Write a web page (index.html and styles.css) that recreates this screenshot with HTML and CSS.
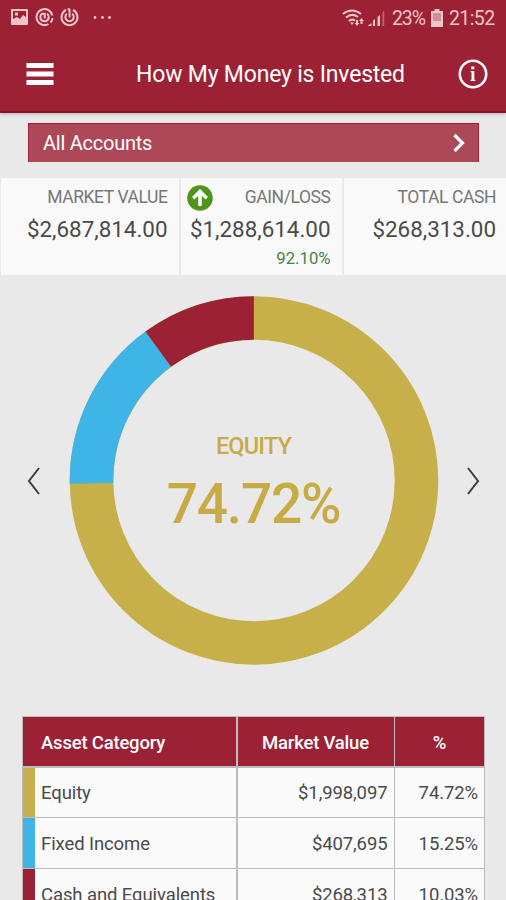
FILE: index.html
```html
<!DOCTYPE html>
<html lang="en">
<head>
<meta charset="utf-8">
<title>How My Money is Invested</title>
<link rel="stylesheet" href="styles.css">
</head>
<body>
<div class="app">
  <header class="top">
    <div class="status">
      <svg class="status-left" width="110" height="24" viewBox="0 0 110 24" fill="none">
        <path fill="#f0c4cb" fill-rule="evenodd" d="M2 4h15a1 1 0 0 1 1 1v14a1 1 0 0 1-1 1H2a1 1 0 0 1-1-1V5a1 1 0 0 1 1-1zM3 6v8l4-2 3 2 3-4 3 2V6zM5 7.500h3v3H5z"/>
        <g stroke="#f0c4cb" stroke-width="2">
          <path d="M38.500 19A8 8 0 1 1 42.300 10.500M42.500 13A8 8 0 0 1 40.500 17.600"/>
          <path d="M32 8.800A4.200 4.200 0 1 0 37 8.800M31.500 8.800H34.700V13.500"/>
          <path d="M63 5A8 8 0 1 1 56 5M57.500 4.200H60"/>
          <path d="M56.800 8.800A4.200 4.200 0 1 0 62.300 8.800M59.600 4V12.500"/>
        </g>
        <g fill="#f0c4cb"><circle cx="85" cy="12.500" r="1.400"/><circle cx="92.500" cy="12.500" r="1.400"/><circle cx="99.500" cy="12.500" r="1.400"/></g>
      </svg>
      <div class="status-right">
        <svg width="46" height="22" viewBox="0 0 46 22" fill="none">
          <g stroke="#f0c4cb" stroke-width="2"><path d="M.8 7Q10 0 19 7M4 10.500Q10 5.500 16 10M6.800 14Q10 11.500 13 13.500"/></g>
          <path fill="#f0c4cb" d="M8 15.500h4L10 18zM14 13h2v3h1.500L15 19l-2.500-3H14zM18.500 17v-3H17l2.500-3 2.500 3h-1.500v3z"/>
          <path fill="#f0c4cb" d="M25.500 19l4-3v3zM31 13.500l2-1.500v7h-2zM35.500 10l2.500-2v11h-2.500z"/><path fill="#bd6573" d="M40.500 5l1.700-1.500V19h-1.700z"/>
        </svg>
        <span class="status-pct">23%</span>
        <svg width="12" height="18" viewBox="0 0 12 18"><path fill="#f0c4cb" d="M3.500 0h5v2H12v16H0V2h3.500z"/><path fill="#d58e99" d="M2 4h8v8H2z"/></svg>
        <span class="status-time">21:52</span>
      </div>
    </div>
    <div class="bar">
      <svg class="menu" width="28" height="24" viewBox="0 0 28 24"><path fill="#fff" d="M.5 1H27.500v5H.5zM.5 9.500H27.500v5H.5zM.5 18H27.500v5H.5z"/></svg>
      <h1 class="title">How My Money is Invested</h1>
      <svg class="info" width="30" height="30" viewBox="0 0 30 30"><circle cx="15" cy="15" r="13.200" fill="none" stroke="#fff" stroke-width="2.600"/><path fill="#fff" d="M13.300 7.500h3v2.800h-3zM12.600 12h3.700v8.800h1v1.200h-4.700v-1.200h.9v-7.600h-.9z"/></svg>
    </div>
  </header>
  <button class="accounts"><span>All Accounts</span>
    <svg width="12" height="20" viewBox="0 0 12 20"><path d="M1.500 2L9.500 10 1.500 18" fill="none" stroke="#fff" stroke-width="3.200"/></svg>
  </button>
  <section class="summary">
    <div class="stat"><div class="label">MARKET VALUE</div><div class="value">$2,687,814.00</div></div>
    <div class="stat">
      <div class="gain"><svg width="26" height="26" viewBox="0 0 26 26"><circle cx="13" cy="13" r="12.800" fill="#4f951b"/><path fill="#fff" d="M13 4L21 12l-2.400 2.500-3.800-3.700V21h-3.600V10.800l-3.800 3.700L5 12z"/></svg><div class="label">GAIN/LOSS</div></div>
      <div class="value">$1,288,614.00</div><div class="change">92.10%</div>
    </div>
    <div class="stat"><div class="label">TOTAL CASH</div><div class="value">$268,313.00</div></div>
  </section>
  <section class="chart">
    <svg class="arrow" width="14" height="28" viewBox="0 0 14 28"><path d="M12 1L2 14 12 27" fill="none" stroke="#3c3c3c" stroke-width="2"/></svg>
    <div class="donut">
      <svg width="370" height="370" viewBox="0 0 370 370">
        <g fill="none" stroke-width="43.600" transform="rotate(-90 184.500 184.500)">
          <circle cx="184.500" cy="185" r="162.500" stroke="#c7b049"/>
          <circle cx="184.500" cy="185" r="162.500" pathLength="100" stroke="#3fb4e6" stroke-dasharray="15.250 84.750" stroke-dashoffset="-74.720"/>
          <circle cx="184.500" cy="185" r="162.500" pathLength="100" stroke="#9c2135" stroke-dasharray="0 89.970 10.020 20"/>
        </g>
      </svg>
      <div class="center"><span class="name">EQUITY</span><span class="percent">74.72%</span></div>
    </div>
    <svg class="arrow" width="14" height="28" viewBox="0 0 14 28"><path d="M2 1L12 14 2 27" fill="none" stroke="#3c3c3c" stroke-width="2"/></svg>
  </section>
  <section class="table">
    <div class="row head"><div class="cell cat">Asset Category</div><div class="cell">Market Value</div><div class="cell">%</div></div>
    <div class="row"><div class="cell cat gold">Equity</div><div class="cell num">$1,998,097</div><div class="cell num">74.72%</div></div>
    <div class="row"><div class="cell cat blue">Fixed Income</div><div class="cell num">$407,695</div><div class="cell num">15.25%</div></div>
    <div class="row"><div class="cell cat red">Cash and Equivalents</div><div class="cell num">$268,313</div><div class="cell num">10.03%</div></div>
  </section>
</div>
</body>
</html>
```
FILE: styles.css
```css
* { box-sizing: border-box; }
body { margin: 0; font-family: Roboto, "Liberation Sans", sans-serif; background: #e9e9e9; color: #4a4a4a; }
.app { width: 506px; height: 900px; overflow: hidden; }
.top { height: 113px; background: #9c2135; border-bottom: 2px solid #920d1c; box-shadow: 0 1px 4px #aab5b5; }
.status { height: 36px; padding: 0 11px 0 10px; display: flex; justify-content: space-between; align-items: center; color: #f0c4cb; font-size: 19.500px; }
.status-left { margin-top: -2px; }
.status-right { display: flex; align-items: center; }
.status-right svg { flex: none; }
.status-pct { margin: 0 6px 0 4px; width: 33px; letter-spacing: -1.100px; white-space: nowrap; }
.status-time { margin-left: 6px; width: 46px; letter-spacing: -.6px; }
.bar { height: 76px; padding: 0 18px 0 26px; display: flex; align-items: center; justify-content: space-between; }
.title { margin: 0 0 0 29px; color: #fff; font-size: 23px; font-weight: 400; letter-spacing: -.2px; white-space: nowrap; }
.accounts { display: flex; align-items: center; justify-content: space-between; width: 451px; height: 39px; margin: 10px 0 0 28px; padding: 0 13px 0 14px; border: solid #a3203f; border-width: 1px 1px 0; background: #ac4858; color: #fff; font: 20px Roboto, sans-serif; letter-spacing: -.25px; }
.summary { display: grid; grid-template-columns: 178px 161px 162px; gap: 2px; height: 97px; margin-top: 16px; padding-left: 1px; }
.stat { background: #f9f9f9; padding: 9px 11.500px 0 0; text-align: right; }
.stat:nth-child(3) { padding-right: 10px; }
.label { font-size: 17.500px; line-height: 20px; letter-spacing: -.42px; color: #777; }
.value { font-size: 22.400px; line-height: 28px; margin-top: 8px; }
.gain { height: 20px; display: flex; justify-content: space-between; align-items: center; padding-left: 6px; }
.gain svg { position: relative; top: 1px; }
.change { color: #48824a; font-size: 16.700px; line-height: 20px; margin-top: 6px; }
.chart { display: flex; align-items: center; justify-content: space-between; height: 370px; margin-top: 21px; padding: 0 26px 0 27px; }
.donut { display: grid; width: 370px; height: 370px; }
.donut > * { grid-area: 1 / 1; }
.center { display: flex; flex-direction: column; align-items: center; color: #c7ac45; font-weight: 500; padding-top: 136px; }
.name { font-size: 23.500px; line-height: 28px; letter-spacing: -.8px; }
.percent { font-size: 55px; line-height: 66px; margin-top: 11px; letter-spacing: -1.200px; }
.table { width: 463px; margin: 50px 0 0 22px; background: #bdbdbd; padding: 1px; display: grid; gap: 1.500px; }
.row { display: grid; grid-template-columns: 213px 156px 89px; gap: 1.500px; height: 49.200px; }
.cell { display: flex; align-items: center; justify-content: center; padding-top: 2px; background: #fafafa; font-size: 18.500px; letter-spacing: -.1px; white-space: nowrap; }
.cat { justify-content: flex-start; padding-left: 18px; }
.head .cell { background: #9c2135; color: #fff; font-weight: 500; letter-spacing: -.2px; }
.num { justify-content: flex-end; padding-right: 6px; }
.gold, .blue, .red { border-left: 12px solid #c7b049; padding-left: 6px; }
.blue { border-color: #3fb4e6; }
.red { border-color: #9c2135; }
```
